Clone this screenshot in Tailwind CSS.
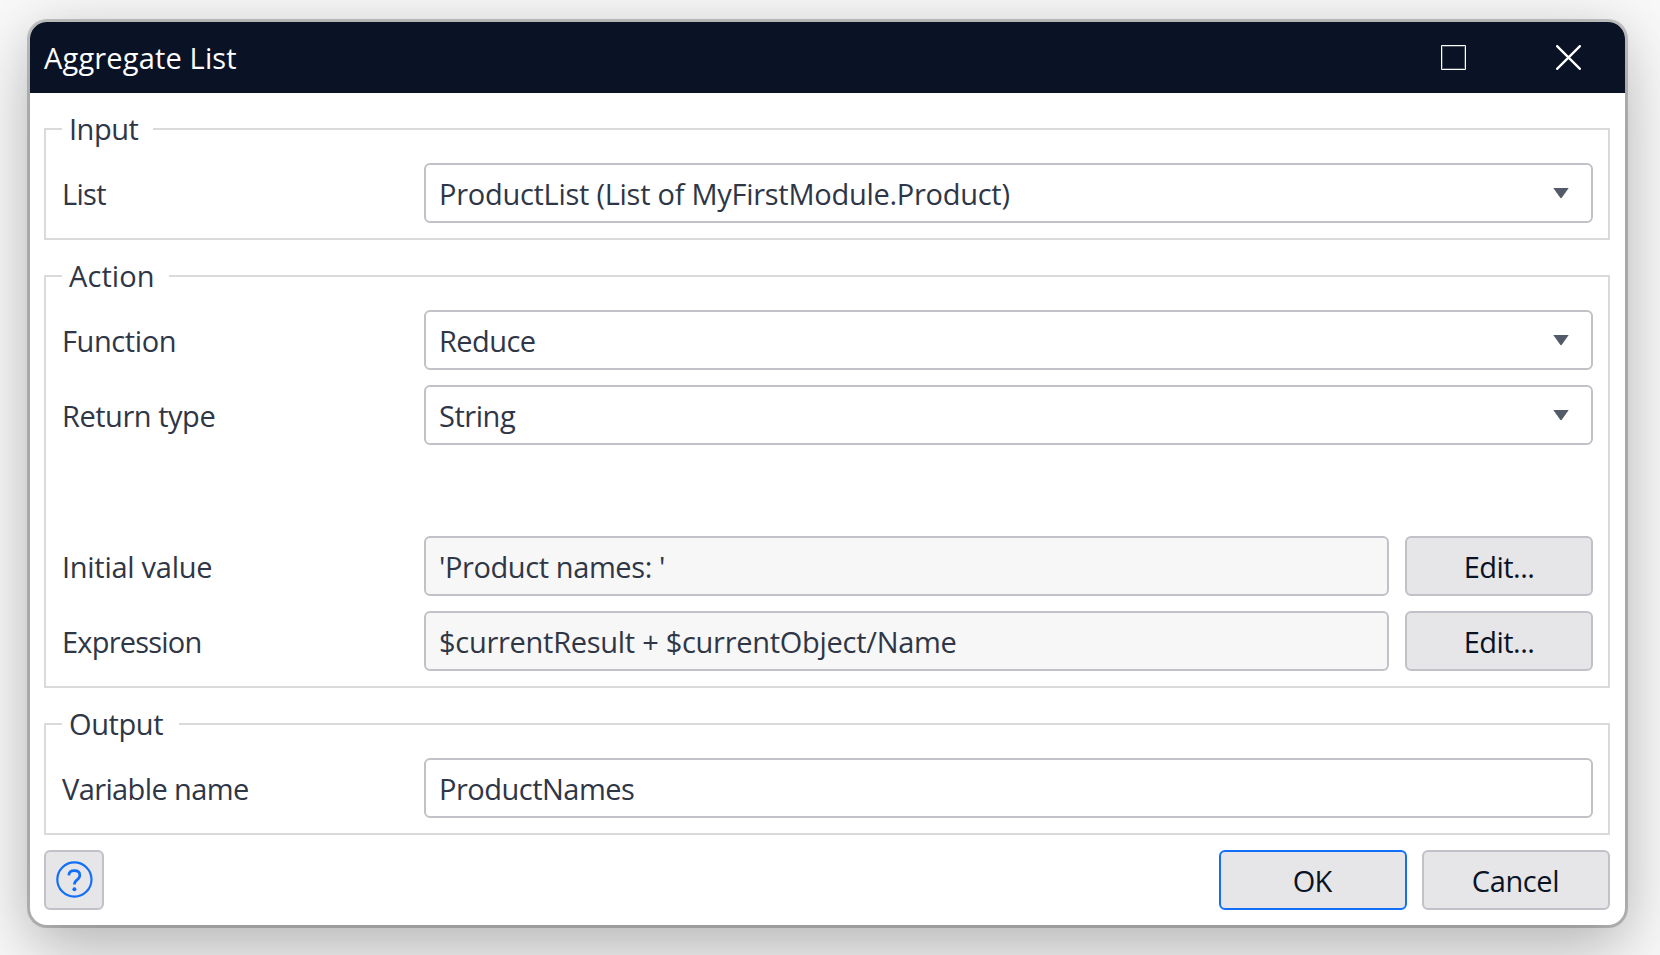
<!DOCTYPE html>
<html lang="en">
<head>
<meta charset="utf-8">
<title>Aggregate List</title>
<script src="https://cdn.jsdelivr.net/npm/@tailwindcss/browser@4"></script>
</head>
<body class="h-[955px] w-[1660px] overflow-hidden bg-[#f8f8f8] pt-[22px] pl-[30px] font-['Open_Sans',sans-serif] text-[29px] leading-[36px] whitespace-nowrap text-[#2f3646]">
<main class="h-[903px] w-[1595px] overflow-hidden rounded-[17px] bg-white shadow-[0_0_0_3px_rgba(0,0,0,0.2),0_4px_50px_rgba(0,0,0,0.15),0_36px_70px_rgba(0,0,0,0.17)]">
  <header class="flex h-[71px] items-center bg-[#0a1325] pl-[14px] text-white">
    <h1 class="grow pt-px tracking-[0.16px]">Aggregate List</h1>
    <button class="mr-[90px] size-[25px]" aria-label="Maximize">
      <svg class="block" width="25" height="25" fill="none"><path d="M.5.5h24v24H.5z" stroke="#fff"/><path d="M1.5 1.5h22v22h-22z" stroke="#6f7480" stroke-opacity=".6"/></svg>
    </button>
    <button class="mr-[44px] size-[25px]" aria-label="Close">
      <svg class="block" width="25" height="25" fill="none" stroke="#fff" stroke-width="2.3"><path d="M.4.4l24.2 24.2M24.6.4L.4 24.6"/></svg>
    </button>
  </header>

  <div class="flex flex-col px-[14px] pt-[18px] pr-[15px]">
    <fieldset class="border-2 border-[#dadadb] pr-[15px] pb-[15px] pl-4">
      <legend class="h-9 w-[91px] pl-[7px] tracking-[-0.5px]">Input</legend>
      <div class="mt-4 flex h-[60px]">
        <span class="w-[362px] pt-[13px] tracking-[-0.7px]">List</span>
        <div class="flex grow items-start justify-between rounded-[6px] border-2 border-[#c1c1c8] pt-[11px] pr-[22px] pl-[13px]">
          <span class="tracking-[-0.27px]">ProductList (List of MyFirstModule.Product)</span>
          <svg class="mt-[12px]" width="16" height="11" fill="#535b69"><path d="M.3 0h15.4L8.8 9.8q-.8.8-1.6 0z"/></svg>
        </div>
      </div>
    </fieldset>

    <fieldset class="mt-[18px] border-2 border-[#dadadb] pr-[15px] pb-[15px] pl-4">
      <legend class="h-9 w-[107px] pl-[7px] tracking-[0.1px]">Action</legend>
      <div class="mt-4 flex h-[60px]">
        <span class="w-[362px] pt-[13px] tracking-[-0.4px]">Function</span>
        <div class="flex grow items-start justify-between rounded-[6px] border-2 border-[#c1c1c8] pt-[11px] pr-[22px] pl-[13px]">
          <span class="tracking-[-0.55px]">Reduce</span>
          <svg class="mt-[12px]" width="16" height="11" fill="#535b69"><path d="M.3 0h15.4L8.8 9.8q-.8.8-1.6 0z"/></svg>
        </div>
      </div>
      <div class="mt-[15px] flex h-[60px]">
        <span class="w-[362px] pt-[13px] tracking-[-0.47px]">Return type</span>
        <div class="flex grow items-start justify-between rounded-[6px] border-2 border-[#c1c1c8] pt-[11px] pr-[22px] pl-[13px]">
          <span class="tracking-[-0.45px]">String</span>
          <svg class="mt-[12px]" width="16" height="11" fill="#535b69"><path d="M.3 0h15.4L8.8 9.8q-.8.8-1.6 0z"/></svg>
        </div>
      </div>
      <div class="mt-[91px] flex h-[60px]">
        <span class="w-[362px] pt-[13px] tracking-[-0.28px]">Initial value</span>
        <div class="grow rounded-[6px] border-2 border-[#c1c1c8] bg-[#f7f7f7] pt-[11px] pl-[13px] tracking-[-0.4px]">'Product names: '</div>
        <button class="ml-4 flex w-[188px] items-start justify-center rounded-[6px] border-2 border-[#c1c1c8] bg-[#e6e6e8] pt-[11px] tracking-[-0.53px] text-[#0a1325]">Edit...</button>
      </div>
      <div class="mt-[15px] flex h-[60px]">
        <span class="w-[362px] pt-[13px] tracking-[-0.8px]">Expression</span>
        <div class="grow rounded-[6px] border-2 border-[#c1c1c8] bg-[#f7f7f7] pt-[11px] pl-[13px] tracking-[-0.28px]">$currentResult + $currentObject/Name</div>
        <button class="ml-4 flex w-[188px] items-start justify-center rounded-[6px] border-2 border-[#c1c1c8] bg-[#e6e6e8] pt-[11px] tracking-[-0.53px] text-[#0a1325]">Edit...</button>
      </div>
    </fieldset>

    <fieldset class="mt-[18px] border-2 border-[#dadadb] pr-[15px] pb-[15px] pl-4">
      <legend class="h-9 w-[117px] pl-[7px] tracking-[-0.4px]">Output</legend>
      <div class="mt-4 flex h-[60px]">
        <span class="w-[362px] pt-[13px] tracking-[-0.62px]">Variable name</span>
        <div class="grow rounded-[6px] border-2 border-[#c1c1c8] pt-[11px] pl-[13px] tracking-[-0.5px]">ProductNames</div>
      </div>
    </fieldset>

    <footer class="mt-[15px] flex h-[60px]">
      <button class="flex w-[60px] items-center justify-center rounded-[6px] border-2 border-[#c1c1c8] bg-[#e6e6e8]" aria-label="Help">
        <svg width="38" height="38" viewBox="0 0 38 38" fill="none" stroke="#146ff8"><circle cx="19.4" cy="18.5" r="17.1" stroke-width="2.2"/><path d="M13.8 14.4c.2-3.2 2.4-4.7 5.5-4.7 3.4 0 5.5 1.8 5.5 4.6 0 2.3-1.2 3.4-2.8 4.5-1.9 1.4-2.6 2.2-2.6 4.8" stroke-width="2.7"/><circle cx="19.4" cy="28.2" r="2" fill="#146ff8" stroke="none"/></svg>
      </button>
      <button class="ml-auto flex w-[188px] items-start justify-center rounded-[6px] border-2 border-[#146ff8] bg-[#e6e6e8] pt-[11px] pr-[2px] tracking-[-1px] text-[#0a1325]">OK</button>
      <button class="ml-[15px] flex w-[188px] items-start justify-center rounded-[6px] border-2 border-[#c1c1c8] bg-[#e6e6e8] pt-[11px] pr-px tracking-[-0.4px] text-[#0a1325]">Cancel</button>
    </footer>
  </div>
</main>
</body>
</html>
